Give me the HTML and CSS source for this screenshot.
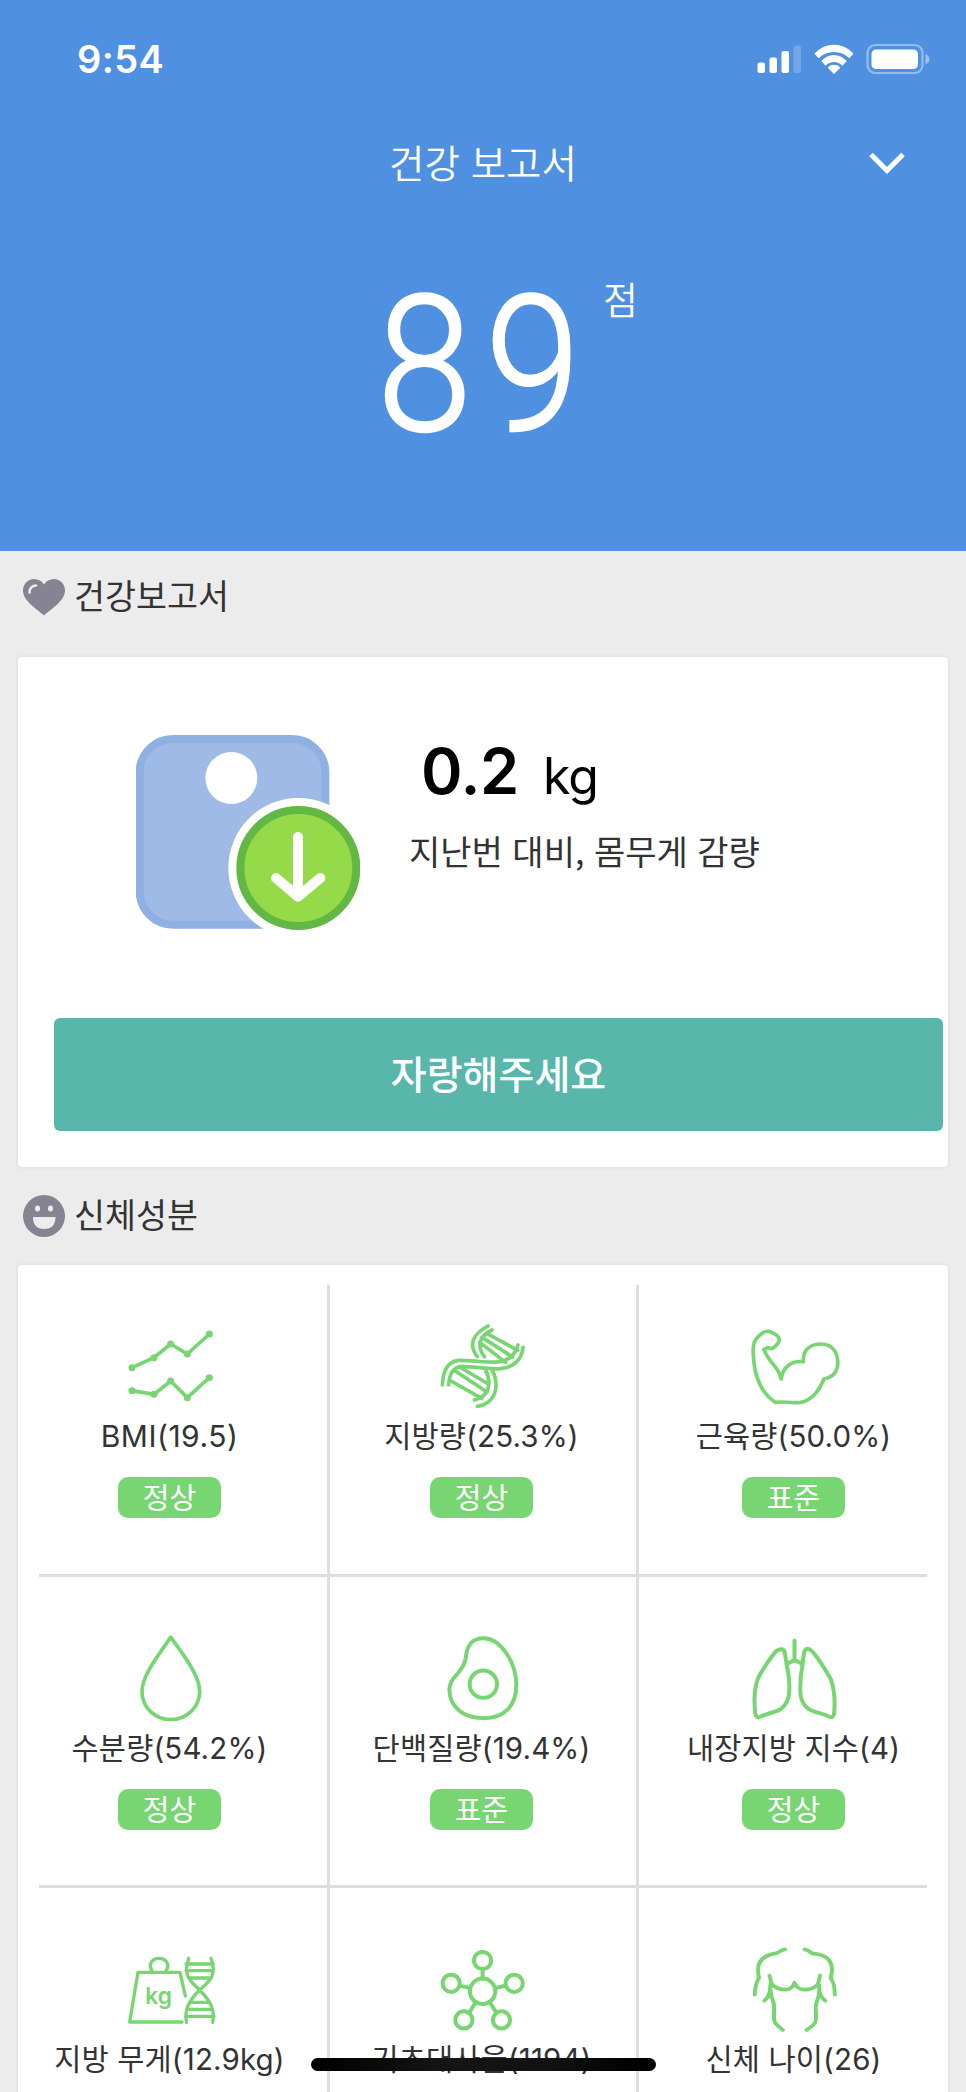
FILE: index.html
```html
<!DOCTYPE html>
<html lang="ko">
<head>
<meta charset="utf-8">
<title>건강 보고서</title>
<link rel="stylesheet" href="styles.css">
</head>
<body>
<div class="screen">
  <header class="hero">
    <div class="status">
      <span class="time">9:54</span>
      <svg class="status-icons" width="174" height="32" viewBox="756 43 174 32" fill="#fff">
        <rect x="757.5" y="62.5" width="7.5" height="10.5" rx="2"/>
        <rect x="769.5" y="57.5" width="7.5" height="15.5" rx="2"/>
        <rect x="781.5" y="51" width="7.5" height="22" rx="2"/>
        <rect x="793.5" y="45.5" width="7.5" height="27.5" rx="2" opacity=".2"/>
        <path d="M814.500 53.700 C825 41.600 843 41.600 853.500 53.700 L849.300 58.300 C841 49.800 827 49.800 818.700 58.300 Z"/>
        <path d="M821.200 61 C828.500 53 839.500 53 846.800 61 L842.400 65.700 C837.500 60.900 830.500 60.900 825.600 65.700 Z"/>
        <path d="M828 68 Q828.500 65 834 64.800 Q839.500 65 840 68 L834 74 Z"/>
        <rect x="867.500" y="45" width="55" height="28" rx="8" fill="none" stroke="#fff" stroke-width="2.200" opacity=".4"/>
        <rect x="871.500" y="49.500" width="46.500" height="19.500" rx="4.500"/>
        <path d="M925.500 54 Q929.500 56 929.500 59.200 Q929.500 62.500 925.500 64.500 Z" opacity=".45"/>
      </svg>
    </div>
    <div class="titlebar">
      <h1 class="title">건강 보고서</h1>
      <svg class="chevron" width="40" height="26" viewBox="0 0 40 26"><path d="M4 4.500 L20 20.500 L36 4.500" fill="none" stroke="#fff" stroke-width="5"/></svg>
    </div>
    <div class="score"><span class="score-num">89</span><span class="score-unit">점</span></div>
  </header>

  <h2 class="section-title section-report">
    <svg class="section-icon" width="42" height="37" viewBox="0 0 42 37"><path d="M21 36.500 C14 30 0 22 0 11.500 C0 5 5 0 11 0 C15.500 0 19 2.200 21 5.500 C23 2.200 26.500 0 31 0 C37 0 42 5 42 11.500 C42 22 28 30 21 36.500 Z" fill="#868493"/><path d="M6.500 13.500 Q6.500 7.200 13 6.600" fill="none" stroke="#ececec" stroke-width="2.500" stroke-linecap="round"/></svg>
    <span>건강보고서</span>
  </h2>
  <section class="card report">
    <div class="summary">
      <svg class="scale" width="224" height="196" viewBox="80 105 672 588">
        <rect x="91" y="117" width="557" height="557" rx="100" fill="#9fbae6" stroke="#8fb0e3" stroke-width="24"/>
        <circle cx="366" cy="234" r="78" fill="#fff"/>
        <circle cx="567" cy="504" r="210" fill="#fff"/>
        <circle cx="567" cy="504" r="174" fill="#95db49" stroke="#62b845" stroke-width="24"/>
        <path d="M566 411 V588 M500 534 L566 590 L633 534" fill="none" stroke="#fff" stroke-width="30" stroke-linecap="round" stroke-linejoin="round"/>
      </svg>
      <div class="delta">
        <p class="delta-value"><b>0.2</b><span>kg</span></p>
        <p class="delta-text">지난번 대비, 몸무게 감량</p>
      </div>
    </div>
    <button class="brag">자랑해주세요</button>
  </section>

  <h2 class="section-title section-body">
    <svg class="section-icon" width="42" height="42" viewBox="0 0 42 42"><circle cx="21" cy="21" r="21" fill="#868493"/><ellipse cx="14.500" cy="13.500" rx="2.500" ry="3" fill="#ececec"/><ellipse cx="27.500" cy="13.500" rx="2.500" ry="3" fill="#ececec"/><path d="M10 22 H32.500 Q32.500 34 21.200 34 Q10 34 10 22 Z" fill="#ececec"/></svg>
    <span>신체성분</span>
  </h2>
  <section class="card metrics">
    <div class="cell">
      <svg class="icon" viewBox="108 66 264 264"><path d="M126 203 L192 173 L242 132 L292 162 L358 102 M126 272 L192 283 L242 243 L292 293 L358 233"/><g class="solid"><circle cx="126" cy="203" r="10.500"/><circle cx="192" cy="173" r="10.500"/><circle cx="242" cy="132" r="10.500"/><circle cx="292" cy="162" r="10.500"/><circle cx="358" cy="102" r="10.500"/><circle cx="126" cy="272" r="10.500"/><circle cx="192" cy="283" r="10.500"/><circle cx="242" cy="243" r="10.500"/><circle cx="292" cy="293" r="10.500"/><circle cx="358" cy="233" r="10.500"/></g></svg>
      <p class="label label-latin">BMI(19.5)</p><span class="badge">정상</span>
    </div>
    <div class="cell">
      <svg class="icon" viewBox="1043 66 264 264"><path d="M1056 255 C1058 210 1075 184 1105 181 C1140 180 1190 188 1222 186 C1255 183 1277 162 1283 135 M1075 255 C1077 220 1090 203 1110 200 C1145 198 1190 209 1230 206 C1270 203 1295 178 1298 142 M1193 78 C1150 101 1132 132 1161 170 M1205 90 C1167 108 1158 138 1182 170 M1186 211 C1208 255 1190 293 1152 300 M1206 211 C1232 265 1210 313 1161 319 M1189 100 L1282 151 M1175 112 L1267 171 M1168 127 L1246 187 M1113 204 L1194 252 M1096 214 L1190 276 M1082 243 L1174 295"/></svg>
      <p class="label">지방량(25.3%)</p><span class="badge">정상</span>
    </div>
    <div class="cell">
      <svg class="icon" viewBox="328.5 66 264 264"><path d="M404 307 C363 280 339 233 338 151 C338 120 350 110 367 98 C381 90 391 94 406 104 C420 115 420 122 408 135 C399 145 394 149 382 143 L370 148 C383 182 405 196 416 219 L422 237 C427 200 454 181 489 185 C485 145 514 132 543 132 C575 132 591 157 592 187 C592 214 578 232 550 237 C537 272 512 302 480 307 C452 310 427 303 404 307 Z"/></svg>
      <p class="label">근육량(50.0%)</p><span class="badge">표준</span>
    </div>

    <div class="cell">
      <svg class="icon" viewBox="198 70.5 264 264"><path d="M332 80 C303 124 246 194 246 242 C246 290 284 327 332 327 C380 327 419 290 419 242 C419 194 365 125 332 80 Z"/></svg>
      <p class="label">수분량(54.2%)</p><span class="badge">정상</span>
    </div>
    <div class="cell">
      <svg class="icon" viewBox="1133 70.5 264 264"><path stroke-width="12" d="M1270 83 C1230 83 1219 110 1216 144 C1209 190 1168 195 1167 238 C1168 290 1209 323 1270 323 C1332 323 1368 286 1368 223 C1368 157 1321 83 1270 83 Z"/><circle cx="1269" cy="221" r="41" stroke-width="12"/></svg>
      <p class="label">단백질량(19.4%)</p><span class="badge">표준</span>
    </div>
    <div class="cell">
      <svg class="icon" viewBox="328.5 70.5 264 264"><path stroke-width="12" d="M462 91 V147 M462 149 L439 160 M462 149 L486 160 M433 127 C432 115 418 112 407 122 C391 140 358 189 352 205 C341 235 341 278 344 305 C345 323 354 321 361 318 C382 308 402 306 420 296 C447 276 448 246 446 218 C446 191 439 171 437 152 Z M491 127 C492 115 503 110 514 122 C530 138 560 187 571 206 C583 240 583 285 581 308 C578 323 571 321 563 317 C542 308 519 305 504 295 C478 276 478 246 480 218 C480 191 486 171 487 152 Z"/></svg>
      <p class="label">내장지방 지수(4)</p><span class="badge">정상</span>
    </div>

    <div class="cell">
      <svg class="icon" viewBox="378 195 264 264"><path stroke-width="10" d="M546 426 H389 L414 277 H540 L556 348 M456 273 C444 250 457 235 477 235 C498 235 511 252 498 273 M566 235 C545 295 582 310 599 330 C628 360 646 385 638 427 M633 235 C655 292 619 310 599 330 C568 360 550 390 560 427 M558 252 H640 M558 272 H640 M570 294 H628 M575 367 H623 M560 388 H638 M557 409 H642"/><text class="icon-text" x="436" y="373">kg</text></svg>
      <p class="label">지방 무게(12.9kg)</p>
    </div>
    <div class="cell">
      <svg class="icon" viewBox="437.7 1945 88 88"><g stroke-width="4"><circle cx="482.300" cy="1991.300" r="12.700"/><circle cx="482.300" cy="1960.500" r="8.600"/><circle cx="450.900" cy="1983.300" r="8.600"/><circle cx="513.900" cy="1983.300" r="8.600"/><circle cx="463.600" cy="2019.900" r="8.600"/><circle cx="501.200" cy="2019.900" r="8.600"/><path d="M482.300 1969 V1978.500 M459.300 1985.600 L469.500 1988 M505.500 1985.600 L495.500 1988 M475.500 2002 L468.700 2013 M489.300 2002 L496.300 2013"/></g></svg>
      <p class="label">기초대사율(1194)</p>
    </div>
    <div class="cell">
      <svg class="icon" viewBox="968 195 243.8 264" preserveAspectRatio="none"><path d="M1065 208 C1053 209 1047 219 1040 220 C997 227 987 253 991 281 L993 294 C983 309 982 324 981 344 M1119 208 C1130 209 1135 219 1143 221 C1187 224 1199 250 1194 281 L1192 294 C1202 313 1202 322 1203 344 M1022 287 L1028 312 C1040 326 1053 329 1067 329 C1081 328 1088 319 1091 308 C1096 320 1102 329 1117 329 C1133 329 1149 323 1157 311 L1162 287 M1025 313 C1022 345 1020 349 1008 362 M1025 330 C1027 368 1036 356 1035 388 C1034 428 1030 424 1059 450 M1159 314 C1161 345 1164 351 1176 362 M1160 330 C1158 369 1149 357 1150 387 C1152 428 1155 427 1125 450"/></svg>
      <p class="label">신체 나이(26)</p>
    </div>
  </section>
  <div class="home-bar"></div>
</div>
</body>
</html>
```

FILE: styles.css
```css
* { box-sizing: border-box; }
body {
  margin: 0;
  background: #ececec;
  color: #333;
  font-family: Inter, "Noto Sans CJK KR", sans-serif;
}
h1, h2, p { margin: 0; font-weight: 400; }
.screen {
  position: relative;
  width: 966px;
  height: 2092px;
  overflow: hidden;
  background: #ececec;
}

.hero { height: 551px; background: #4f90e1; color: #fff; }
.status {
  display: flex;
  justify-content: space-between;
  height: 120px;
  padding: 43px 36px 0 77px;
}
.time { font-size: 38px; line-height: 32px; font-weight: 600; letter-spacing: .4px; }
.titlebar {
  display: grid;
  grid-template-columns: 100px 1fr 100px;
  align-items: center;
  height: 86px;
}
.title { grid-column: 2; padding-bottom: 4px; font-size: 38.5px; line-height: 56px; text-align: center; font-family: "Noto Sans CJK KR", sans-serif; font-weight: 350; }
.chevron { margin-left: 1px; }
.score { display: flex; align-items: flex-start; padding: 61px 0 0 377px; }
.score-num {
  width: 226px;
  padding-top: 3px;
  font-family: Roboto, sans-serif;
  font-weight: 300;
  font-size: 190px;
  line-height: 190px;
  letter-spacing: 15px;
  -webkit-text-stroke: 2.5px #fff;
  transform: scaleX(.9);
  transform-origin: 0 0;
}
.score-unit { font-size: 38px; line-height: 54px; margin-top: 4px; font-family: "Noto Sans CJK KR", sans-serif; font-weight: 350; }

.section-title {
  display: flex;
  align-items: center;
  gap: 9px;
  padding-left: 23px;
  font-family: "Noto Sans CJK KR", sans-serif;
  font-size: 33.7px;
  line-height: 50px;
}
.section-title span { padding-bottom: 4px; }
.section-report { height: 104px; padding-bottom: 12px; }
.section-body { height: 94px; }

.card {
  width: 934px;
  margin-left: 16px;
  background: #fff;
  border: 2px solid #e5e5e5;
  border-radius: 6px;
}
.report { height: 514px; padding: 78px 3px 0 36px; }
.summary { display: flex; height: 283px; padding-left: 82px; }
.delta { padding-left: 49px; }
.delta-value { display: flex; align-items: baseline; gap: 24px; height: 76px; padding-left: 12px; color: #000; line-height: 72px; }
.delta-value b { font-size: 63px; font-weight: 600; letter-spacing: -.4px; }
.delta-value span { font-size: 50px; letter-spacing: -1px; }
.delta-text { font-family: "Noto Sans CJK KR", sans-serif; font-size: 34px; line-height: 50px; margin-top: 15px; }
.brag {
  display: block;
  width: 889px;
  height: 113px;
  padding: 0;
  border: 0;
  border-radius: 6px;
  background: #59b6ab;
  color: #fff;
  font: 500 39px/58px "Noto Sans CJK KR", sans-serif;
  padding-bottom: 5px;
}

.metrics {
  display: grid;
  grid-template-columns: 291px 309px 288px;
  grid-template-rows: 292px 311px 240px;
  height: 860px;
  padding: 20px 0 0 21px;
}
.cell {
  display: flex;
  flex-direction: column;
  align-items: center;
  padding-top: 37px;
  border-bottom: 3px solid #dedede;
  border-right: 3px solid #dedede;
}
.cell:nth-child(n+4) { padding-top: 57px; }
.cell:nth-child(3n+1) { padding-right: 27px; }
.cell:nth-child(3n+2) { padding-right: 3px; }
.cell:nth-child(3n) { padding-left: 21px; border-right: 0; }
.cell:nth-child(n+7) { padding-top: 57px; border-bottom: 0; }
.icon {
  width: 88px;
  height: 88px;
  flex: none;
  overflow: visible;
  fill: none;
  stroke: #77d572;
  stroke-width: 11;
  stroke-linecap: round;
  stroke-linejoin: round;
}
.solid { fill: #77d572; stroke: none; }
.icon-text { font: 600 68px Inter, sans-serif; fill: #77d572; stroke: none; }
.label { height: 43px; margin-top: 5px; font-size: 29.5px; line-height: 43px; white-space: nowrap; letter-spacing: .15px; }
.label-latin { font-size: 30px; letter-spacing: .5px; }
.cell:nth-child(n+7) .label { height: 38px; overflow: hidden; }
.badge {
  width: 103px;
  height: 41px;
  margin-top: 19px;
  border-radius: 10px;
  background: #77d572;
  color: #fff;
  font: 29px/39px "Noto Sans CJK KR", sans-serif;
  text-align: center;
}
.home-bar {
  position: absolute;
  left: 311px;
  top: 2058px;
  width: 345px;
  height: 13px;
  border-radius: 7px;
  background: linear-gradient(90deg, #000, #151515 40%, #111 70%, #000 95%);
}
```
